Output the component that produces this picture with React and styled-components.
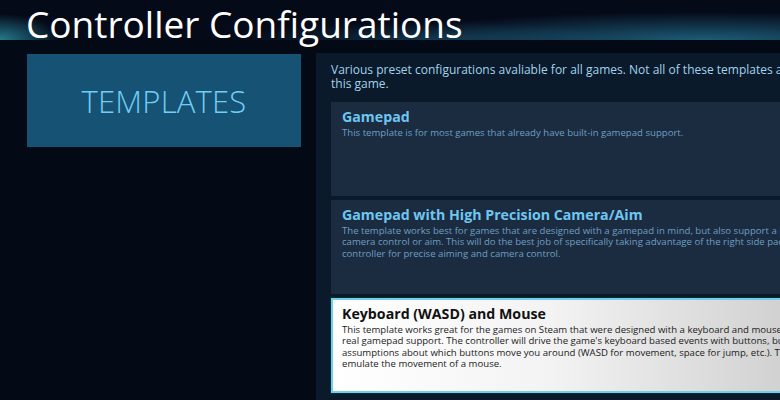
import React from "react";
import styled, { createGlobalStyle } from "styled-components";

const Global = createGlobalStyle`
  html, body { margin: 0; padding: 0; background: #030a16; overflow: hidden; }
  body { width: 780px; height: 400px; font-family: "Open Sans", "Noto Sans", sans-serif; }
`;

const Page = styled.div`
  width: 780px;
  height: 400px;
  overflow: hidden;
  background: #030a16;
  display: flex;
  flex-direction: column;
`;

const Header = styled.header`
  height: 40px;
  flex: none;
  box-sizing: border-box;
  padding-left: 26px;
  position: relative;
  z-index: 1;
  background:
    radial-gradient(ellipse 60px 26px at 0% 100%, rgba(40, 135, 155, 0.9), rgba(40, 135, 155, 0) 100%),
    radial-gradient(ellipse 330px 28px at 90% 100%, rgba(34, 112, 142, 0.8), rgba(34, 112, 142, 0) 100%),
    radial-gradient(ellipse 200px 18px at 55% 100%, rgba(30, 90, 120, 0.45), rgba(30, 90, 120, 0) 100%),
    #050a19;
`;

const Title = styled.h1`
  margin: -1px 0 0;
  font-family: "Open Sans", sans-serif;
  font-weight: 400;
  font-size: 37px;
  line-height: 50px;
  height: 40px;
  color: #ffffff;
  white-space: nowrap;
`;

const Body = styled.div`
  flex: 1;
  display: flex;
  padding-top: 13px;
  min-height: 0;
`;

const Sidebar = styled.nav`
  width: 274px;
  flex: none;
  margin-left: 27px;
  margin-right: 15px;
  padding-top: 1px;
`;

const Tile = styled.div`
  height: 93px;
  background: #155274;
  display: flex;
  align-items: center;
  justify-content: center;
  font-family: "Open Sans", sans-serif;
  font-weight: 300;
  font-size: 31px;
  color: #72cdf4;
  letter-spacing: 0.2px;
`;

const Panel = styled.section`
  flex: none;
  width: 560px;
  background: #0a1a2a;
  padding: 10px 0 0 15px;
  box-sizing: border-box;
  display: flex;
  flex-direction: column;
  gap: 4px;
`;

const Intro = styled.p`
  margin: 0 0 7px;
  font-size: 12px;
  line-height: 14px;
  color: #a3d3ec;
  white-space: nowrap;
`;

const Card = styled.div`
  height: ${(p) => (p.$active ? "95px" : "94px")};
  flex: none;
  box-sizing: border-box;
  padding: ${(p) => (p.$active ? "4px 9px" : "5px 11px")};
  background: ${(p) =>
    p.$active ? "linear-gradient(90deg, #ffffff 0%, #f3f3f3 40%, #c4c4c4 100%)" : "#1b2b40"};
  border: ${(p) => (p.$active ? "2px solid #6fd0ea" : "none")};
  box-shadow: ${(p) => (p.$active ? "0 0 0 1px #0d2a38" : "none")};
  overflow: hidden;
`;

const CardTitle = styled.div`
  font-weight: 700;
  font-size: 14.2px;
  line-height: 20px;
  color: ${(p) => (p.$active ? "#111111" : "#6ec6f2")};
  white-space: nowrap;
`;

const CardText = styled.div`
  font-size: 9.6px;
  line-height: 11.3px;
  color: ${(p) => (p.$active ? "#1c1c1c" : "#6e9fc2")};
  white-space: nowrap;
`;

const templates = [
  {
    name: "Gamepad",
    lines: ["This template is for most games that already have built-in gamepad support."],
  },
  {
    name: "Gamepad with High Precision Camera/Aim",
    lines: [
      "The template works best for games that are designed with a gamepad in mind, but also support a mouse for",
      "camera control or aim. This will do the best job of specifically taking advantage of the right side pad on the",
      "controller for precise aiming and camera control.",
    ],
  },
  {
    name: "Keyboard (WASD) and Mouse",
    active: true,
    lines: [
      "This template works great for the games on Steam that were designed with a keyboard and mouse, but lack",
      "real gamepad support. The controller will drive the game's keyboard based events with buttons, but makes",
      "assumptions about which buttons move you around (WASD for movement, space for jump, etc.). The trackpads",
      "emulate the movement of a mouse.",
    ],
  },
];

export default function App() {
  return (
    <Page>
      <Global />
      <Header>
        <Title>Controller Configurations</Title>
      </Header>
      <Body>
        <Sidebar>
          <Tile>TEMPLATES</Tile>
        </Sidebar>
        <Panel>
          <Intro>
            Various preset configurations avaliable for all games. Not all of these templates are applicable to
            <br />
            this game.
          </Intro>
          {templates.map((t) => (
            <Card key={t.name} $active={t.active}>
              <CardTitle $active={t.active}>{t.name}</CardTitle>
              {t.lines.map((l, i) => (
                <CardText key={i} $active={t.active}>
                  {l}
                </CardText>
              ))}
            </Card>
          ))}
        </Panel>
      </Body>
    </Page>
  );
}
